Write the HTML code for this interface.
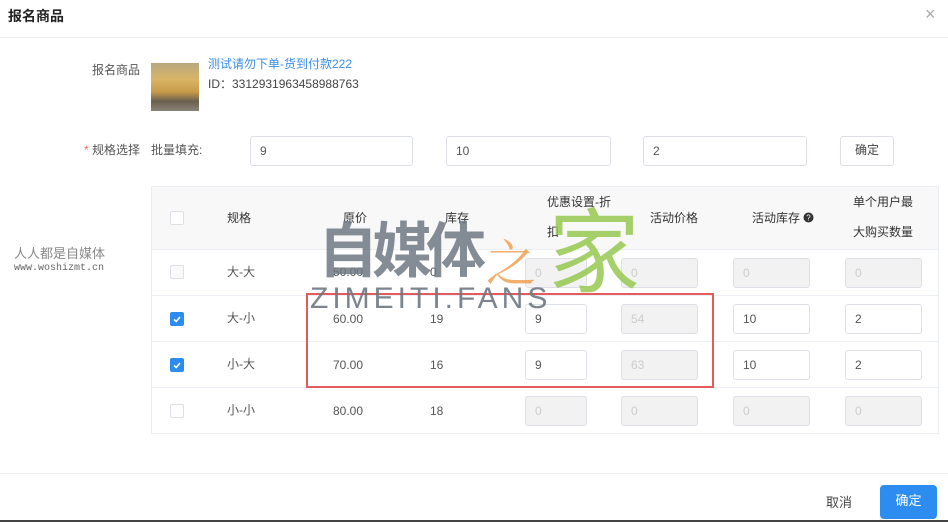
<!DOCTYPE html>
<html><head><meta charset="utf-8">
<style>
*{margin:0;padding:0;box-sizing:border-box}
body{width:948px;height:522px;background:#fff;font-family:"Liberation Sans","Noto Sans CJK SC",sans-serif;font-size:12px;color:#333;position:relative;overflow:hidden}
.a{position:absolute;white-space:nowrap}
.inp{position:absolute;border:1px solid #dcdfe6;border-radius:3px;background:#fff;font-size:12px;color:#555;padding-left:9px}
.dis{background:#f2f2f2;color:#ccc}
.cb{position:absolute;width:14px;height:14px;border:1px solid #dcdfe6;border-radius:2px;background:#fff}
.cbon{background:#2d8cf0;border-color:#2d8cf0}
.hl{position:absolute;left:152px;width:786px;height:1px;background:#ebeef5}
.th{position:absolute;color:#333;font-size:12px;white-space:nowrap}
</style></head><body>
<div class="a" style="left:8px;top:6px;font-size:14px;font-weight:bold;color:#222">报名商品</div>
<div class="a" style="left:925px;top:4px;font-size:18px;color:#aaa">×</div>
<div style="position:absolute;left:0;top:37px;width:948px;height:1px;background:#eee"></div>

<div class="a" style="left:92px;top:61px;color:#555">报名商品</div>
<div class="a" style="left:151px;top:63px;width:48px;height:48px;background:linear-gradient(180deg,#b8a780 0%,#d9b564 35%,#c79b4a 60%,#6a6050 80%,#8a8478 100%)"></div>
<div class="a" style="left:208px;top:55px;color:#3a8ee6">测试请勿下单-货到付款222</div>
<div class="a" style="left:208px;top:75px;color:#444">ID：3312931963458988763</div>

<div class="a" style="left:84px;top:141px;color:#555"><span style="color:#f56c6c">*</span> 规格选择</div>
<div class="a" style="left:151px;top:141px;color:#555">批量填充:</div>
<div class="inp" style="left:250px;top:136px;width:163px;height:30px;line-height:28px">9</div>
<div class="inp" style="left:446px;top:136px;width:165px;height:30px;line-height:28px">10</div>
<div class="inp" style="left:643px;top:136px;width:164px;height:30px;line-height:28px">2</div>
<div class="inp" style="left:840px;top:136px;width:54px;height:30px;line-height:26px;padding-left:0;text-align:center;color:#444">确定</div>

<div style="position:absolute;left:151px;top:186px;width:788px;height:248px;border:1px solid #ebeef5"></div>
<div style="position:absolute;left:152px;top:187px;width:786px;height:62px;background:#f8f8f9"></div>
<div class="hl" style="top:249px"></div>
<div class="hl" style="top:295px"></div>
<div class="hl" style="top:341px"></div>
<div class="hl" style="top:387px"></div>

<div class="cb" style="left:170px;top:211px"></div>
<div class="th" style="left:227px;top:209px">规格</div>
<div class="th" style="left:343px;top:209px">原价</div>
<div class="th" style="left:445px;top:209px">库存</div>
<div class="th" style="left:547px;top:193px">优惠设置-折</div>
<div class="th" style="left:547px;top:223px">扣</div>
<div class="th" style="left:650px;top:209px">活动价格</div>
<div class="th" style="left:752px;top:209px">活动库存 <svg width="11" height="11" style="vertical-align:-1px"><circle cx="5.5" cy="5.5" r="5" fill="#333"/><text x="5.5" y="8.5" font-size="8" fill="#fff" text-anchor="middle" font-family="Liberation Sans">?</text></svg></div>
<div class="th" style="left:853px;top:193px">单个用户最</div>
<div class="th" style="left:853px;top:223px">大购买数量</div>

<!-- rows -->
<div class="cb" style="left:170px;top:265px;background:#fafafa"></div>
<div class="a" style="left:227px;top:263px;color:#555">大-大</div>
<div class="a" style="left:333px;top:265px;color:#555">50.00</div>
<div class="a" style="left:430px;top:265px;color:#555">0</div>
<div class="inp dis" style="left:525px;top:258px;width:62px;height:30px;line-height:28px">0</div>
<div class="inp dis" style="left:621px;top:258px;width:77px;height:30px;line-height:28px">0</div>
<div class="inp dis" style="left:733px;top:258px;width:77px;height:30px;line-height:28px">0</div>
<div class="inp dis" style="left:845px;top:258px;width:77px;height:30px;line-height:28px">0</div>

<div class="cb cbon" style="left:170px;top:312px"><svg width="12" height="12" style="position:absolute;left:0;top:0"><path d="M3 6.5 L5.2 8.5 L9 4" stroke="#fff" stroke-width="1.6" fill="none"/></svg></div>
<div class="a" style="left:227px;top:309px;color:#555">大-小</div>
<div class="a" style="left:333px;top:312px;color:#555">60.00</div>
<div class="a" style="left:430px;top:312px;color:#555">19</div>
<div class="inp" style="left:525px;top:304px;width:62px;height:30px;line-height:28px">9</div>
<div class="inp dis" style="left:621px;top:304px;width:77px;height:30px;line-height:28px">54</div>
<div class="inp" style="left:733px;top:304px;width:77px;height:30px;line-height:28px">10</div>
<div class="inp" style="left:845px;top:304px;width:77px;height:30px;line-height:28px">2</div>

<div class="cb cbon" style="left:170px;top:358px"><svg width="12" height="12" style="position:absolute;left:0;top:0"><path d="M3 6.5 L5.2 8.5 L9 4" stroke="#fff" stroke-width="1.6" fill="none"/></svg></div>
<div class="a" style="left:227px;top:355px;color:#555">小-大</div>
<div class="a" style="left:333px;top:358px;color:#555">70.00</div>
<div class="a" style="left:430px;top:358px;color:#555">16</div>
<div class="inp" style="left:525px;top:350px;width:62px;height:30px;line-height:28px">9</div>
<div class="inp dis" style="left:621px;top:350px;width:77px;height:30px;line-height:28px">63</div>
<div class="inp" style="left:733px;top:350px;width:77px;height:30px;line-height:28px">10</div>
<div class="inp" style="left:845px;top:350px;width:77px;height:30px;line-height:28px">2</div>

<div class="cb" style="left:170px;top:404px"></div>
<div class="a" style="left:227px;top:401px;color:#555">小-小</div>
<div class="a" style="left:333px;top:404px;color:#555">80.00</div>
<div class="a" style="left:430px;top:404px;color:#555">18</div>
<div class="inp dis" style="left:525px;top:396px;width:62px;height:30px;line-height:28px">0</div>
<div class="inp dis" style="left:621px;top:396px;width:77px;height:30px;line-height:28px">0</div>
<div class="inp dis" style="left:733px;top:396px;width:77px;height:30px;line-height:28px">0</div>
<div class="inp dis" style="left:845px;top:396px;width:77px;height:30px;line-height:28px">0</div>

<!-- red box -->
<div style="position:absolute;left:306px;top:293px;width:408px;height:95px;border:2px solid #e35b5b"></div>

<!-- watermark -->
<div class="a" style="left:14px;top:243px;font-size:13px;color:#888">人人都是自媒体</div>
<div class="a" style="left:14px;top:263px;font-size:10px;color:#666;font-family:'Liberation Mono',monospace">www.woshizmt.cn</div>
<div class="a" style="left:318px;top:220px;font-size:60px;font-weight:bold;color:rgba(110,120,130,.85);letter-spacing:-6px;line-height:64px;transform:scaleX(1.0)">自媒体</div>
<div class="a" style="left:486px;top:232px;font-size:50px;color:rgba(240,160,80,.85);line-height:56px;font-family:'Noto Serif CJK SC',serif">之</div>
<div class="a" style="left:548px;top:204px;font-size:92px;color:rgba(150,200,80,.85);line-height:100px">家</div>
<div class="a" style="left:310px;top:283px;font-size:30px;color:rgba(110,120,130,.9);letter-spacing:4px;line-height:32px">ZIMEITI.FANS</div>

<!-- footer -->
<div style="position:absolute;left:0;top:473px;width:948px;height:1px;background:#eee"></div>
<div class="a" style="left:826px;top:492px;font-size:13px;color:#444">取消</div>
<div class="a" style="left:880px;top:485px;width:57px;height:34px;background:#2d8cf0;border-radius:4px;color:#fff;font-size:13px;text-align:center;line-height:32px">确定</div>
<div style="position:absolute;left:0;top:520px;width:948px;height:2px;background:#444"></div>
</body></html>
